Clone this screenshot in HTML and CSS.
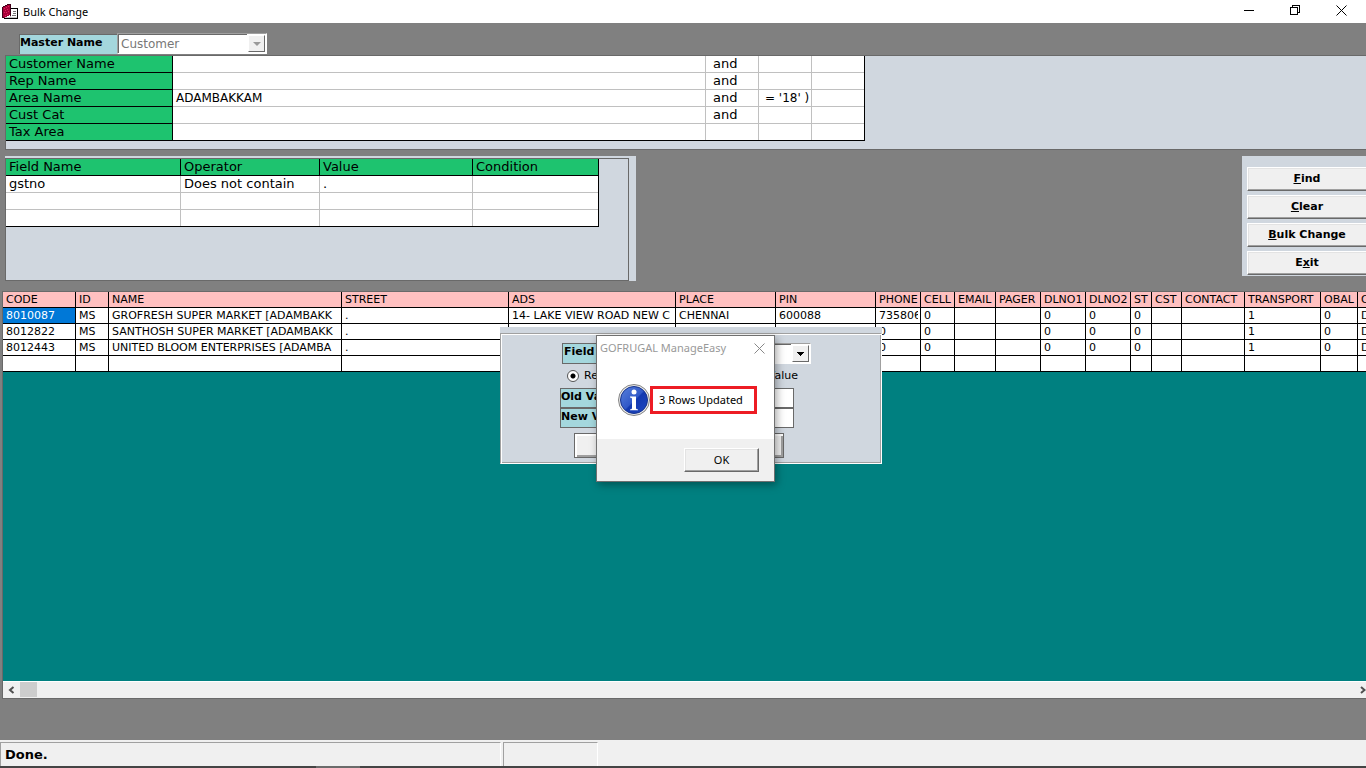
FILE: index.html
```html
<!DOCTYPE html>
<html lang="en">
<head>
<meta charset="utf-8">
<title>Bulk Change</title>
<link rel="stylesheet" href="styles.css">
</head>
<body>
<header class="titlebar">
  <svg class="app-icon" width="17" height="16" viewBox="0 0 17 16" shape-rendering="crispEdges">
    <path d="M8 4h8v10H2v-1h6z" fill="#c8c8c8"/><path d="M9 5h6v8H9z" fill="#fff"/>
    <path d="M11 7h3v1h-3zM11 9h3v1h-3zM10 11h4v1h-4z" fill="#777"/>
    <path d="M9 4h7v11H2v-1h13V5H9z" fill="#000"/>
    <path d="M1 3l7-3v11l-6 3H1z" fill="#a80038"/><path d="M0 3h1v10h1v1H0zM1 2h2v1H1zM3 1h2v1H3zM5 0h3v1H5zM8 0h1v12H8z" fill="#400018"/>
    <path d="M2 4h1v1H2zM4 3h1v1H4zM6 2h1v1H6zM3 6h1v1H3zM5 5h1v1H5zM2 8h1v1H2zM4 8h1v1H4zM6 7h1v1H6zM3 11h1v1H3zM5 10h1v1H5z" fill="#e0205c"/>
  </svg>
  <h1 class="title">Bulk Change</h1>
  <div class="window-controls">
    <button type="button" aria-label="Minimize"><svg width="11" height="11" shape-rendering="crispEdges"><path d="M0 5.500h10" stroke="#000"/></svg></button>
    <button type="button" aria-label="Restore"><svg width="11" height="11" shape-rendering="crispEdges"><path d="M.5 2.500h7v7h-7zM2.500 2V.5h7v7H8" fill="none" stroke="#000"/></svg></button>
    <button type="button" aria-label="Close"><svg width="11" height="11"><path d="M.5.5l10 10M10.500.5l-10 10" stroke="#000"/></svg></button>
  </div>
</header>

<main class="workspace">
  <div class="master">
    <label class="tag" for="master">Master Name</label>
    <div class="combo combo-disabled">
      <select id="master" disabled><option>Customer</option></select>
      <span class="drop"><svg width="8" height="4"><path d="M0 0h8L4 4z" fill="#999"/></svg></span>
    </div>
  </div>

  <section class="filters">
    <table class="sheet filter-table">
      <colgroup><col class="f-name"><col class="f-value"><col class="f-small"><col class="f-small"><col class="f-small"></colgroup>
      <tbody>
      <tr><th scope="row">Customer Name</th><td></td><td class="join">and</td><td></td><td></td></tr>
      <tr><th scope="row">Rep Name</th><td></td><td class="join">and</td><td></td><td></td></tr>
      <tr><th scope="row">Area Name</th><td class="compact">ADAMBAKKAM</td><td class="join">and</td><td class="compact expr">= '18' )</td><td></td></tr>
      <tr><th scope="row">Cust Cat</th><td></td><td class="join">and</td><td></td><td></td></tr>
      <tr><th scope="row">Tax Area</th><td></td><td></td><td></td><td></td></tr>
      </tbody>
    </table>
  </section>

  <div class="middle">
    <section class="conditions">
      <div class="conditions-frame">
        <table class="sheet condition-table">
          <colgroup><col class="c-field"><col class="c-operator"><col class="c-value"><col class="c-condition"></colgroup>
          <thead><tr><th>Field Name</th><th>Operator</th><th>Value</th><th>Condition</th></tr></thead>
          <tbody>
          <tr><td>gstno</td><td>Does not contain</td><td>.</td><td></td></tr>
          <tr><td></td><td></td><td></td><td></td></tr>
          <tr><td></td><td></td><td></td><td></td></tr>
          </tbody>
        </table>
      </div>
    </section>
    <nav class="actions">
      <button type="button" class="btn"><u>F</u>ind</button>
      <button type="button" class="btn"><u>C</u>lear</button>
      <button type="button" class="btn"><u>B</u>ulk Change</button>
      <button type="button" class="btn">E<u>x</u>it</button>
    </nav>
  </div>

  <section class="results">
    <div class="results-body">
      <table class="data">
        <colgroup><col class="w73"><col class="w33"><col class="w233"><col class="w167"><col class="w167"><col class="w100"><col class="w100"><col class="w45"><col class="w34"><col class="w41"><col class="w45"><col class="w45"><col class="w45"><col class="w21"><col class="w30"><col class="w63"><col class="w76"><col class="w37"><col class="w73"></colgroup>
        <thead><tr><th>CODE</th><th>ID</th><th>NAME</th><th>STREET</th><th>ADS</th><th>PLACE</th><th>PIN</th><th>PHONE</th><th>CELL</th><th>EMAIL</th><th>PAGER</th><th>DLNO1</th><th>DLNO2</th><th>ST</th><th>CST</th><th>CONTACT</th><th>TRANSPORT</th><th>OBAL</th><th>O</th></tr></thead>
        <tbody>
        <tr><td class="selected">8010087</td><td>MS</td><td><div>GROFRESH SUPER MARKET [ADAMBAKK</div></td><td>.</td><td><div>14- LAKE VIEW ROAD NEW C</div></td><td>CHENNAI</td><td>600088</td><td><div>735806</div></td><td>0</td><td></td><td></td><td>0</td><td>0</td><td>0</td><td></td><td></td><td>1</td><td>0</td><td>D</td></tr>
        <tr><td>8012822</td><td>MS</td><td><div>SANTHOSH SUPER MARKET [ADAMBAKK</div></td><td>.</td><td></td><td></td><td></td><td>0</td><td>0</td><td></td><td></td><td>0</td><td>0</td><td>0</td><td></td><td></td><td>1</td><td>0</td><td>D</td></tr>
        <tr><td>8012443</td><td>MS</td><td><div>UNITED BLOOM ENTERPRISES [ADAMBA</div></td><td>.</td><td></td><td></td><td></td><td>0</td><td>0</td><td></td><td></td><td>0</td><td>0</td><td>0</td><td></td><td></td><td>1</td><td>0</td><td>D</td></tr>
        <tr><td></td><td></td><td></td><td></td><td></td><td></td><td></td><td></td><td></td><td></td><td></td><td></td><td></td><td></td><td></td><td></td><td></td><td></td><td></td></tr>
        </tbody>
      </table>
    </div>
    <div class="scrollbar">
      <button type="button" aria-label="Scroll left"><svg width="7" height="8"><path d="M5.500 1L2 4l3.500 3" fill="none" stroke="#505050" stroke-width="2"/></svg></button>
      <span class="thumb"></span>
      <button type="button" class="scroll-right" aria-label="Scroll right"><svg width="6" height="8"><path d="M1 1l3.500 3L1 7" fill="none" stroke="#505050" stroke-width="2"/></svg></button>
    </div>
  </section>
</main>

<footer class="statusbar">
  <div class="status-main">Done.</div>
  <div class="status-extra"></div>
</footer>
<div class="screen-edge"></div>

<form class="change-panel">
  <div class="change-frame">
    <div class="field-row">
      <label class="tag" for="field">Field</label>
      <div class="combo">
        <select id="field"><option></option></select>
        <span class="drop"><svg width="7" height="4" shape-rendering="crispEdges"><path d="M0 0h7L3.500 4z" fill="#000"/></svg></span>
      </div>
    </div>
    <div class="mode-row">
      <label><input type="radio" name="mode" checked>Replace</label>
      <label><input type="radio" name="mode">Value</label>
    </div>
    <div class="value-row"><label class="tag" for="old">Old Value</label><input id="old" type="text"></div>
    <div class="value-row"><label class="tag" for="new">New Value</label><input id="new" type="text"></div>
    <div class="button-row"><button type="button" class="btn" aria-label="Change"></button><button type="button" class="btn" aria-label="Cancel"></button></div>
  </div>
</form>

<div class="message" role="alertdialog" aria-labelledby="message-title">
  <div class="message-head">
    <h2 class="title" id="message-title">GOFRUGAL ManageEasy</h2>
    <button type="button" aria-label="Close"><svg width="11" height="11"><path d="M.5.5l10 10M10.500.5l-10 10" stroke="#888"/></svg></button>
  </div>
  <div class="message-body">
    <svg width="32" height="32" viewBox="0 0 32 32">
      <defs><linearGradient id="blue" x1="0" y1="0" x2="1" y2="1"><stop offset="0" stop-color="#5a82dc"/><stop offset=".5" stop-color="#3058c8"/><stop offset=".54" stop-color="#1238b0"/><stop offset="1" stop-color="#2048c0"/></linearGradient></defs>
      <circle cx="16" cy="16" r="15.500" fill="#e8e8e8" stroke="#858585"/>
      <circle cx="16" cy="16" r="13.500" fill="url(#blue)" stroke="#17348e"/>
      <circle cx="16" cy="8" r="2.500" fill="#fff"/>
      <path d="M12 12.500h6v11.500c0 1 .5 1.200 2 1.500v.8h-8v-.8c1.500-.3 2-.5 2-1.500v-9c0-1-.5-1.300-2-1.500z" fill="#fff"/>
    </svg>
    <p class="message-text">3 Rows Updated</p>
  </div>
  <div class="message-foot"><button type="button" class="btn btn-ok">OK</button></div>
</div>
</body>
</html>
```
FILE: styles.css
```css
* { box-sizing: border-box; }

body {
  margin: 0;
  height: 100vh;
  display: flex;
  flex-direction: column;
  position: relative;
  overflow: hidden;
  background: #808080;
  color: #000;
  font: 12px/16px "DejaVu Sans", Verdana, sans-serif;
}

button, input, select { font: inherit; color: inherit; margin: 0; }

.title {
  margin: 0;
  font: 11px/16px "Noto Sans", "Segoe UI", sans-serif;
}

/* Title bar */
.titlebar {
  display: flex;
  align-items: center;
  height: 23px;
  padding-left: 2px;
  gap: 4px;
  background: #fff;
}
.window-controls { display: flex; margin-left: auto; height: 100%; padding-right: 2px; }
.window-controls button {
  width: 46px;
  padding: 0 0 3px;
  border: 0;
  background: none;
  display: flex;
  align-items: center;
  justify-content: center;
}

.workspace { flex: 1; min-height: 0; display: flex; flex-direction: column; }

/* Labels and combos */
.tag {
  display: block;
  padding-left: 1px;
  border: 1px solid #696969;
  background: #a4d7dd;
  font-size: 11px;
  font-weight: bold;
  line-height: 15px;
  white-space: nowrap;
}
.combo {
  display: flex;
  border: 1px solid #a0a0a0;
  border-right-color: #fff;
  border-bottom-color: #fff;
  background: #fff;
}
.combo select {
  flex: 1;
  min-width: 0;
  padding: 0 2px;
  border: 1px solid #696969;
  border-width: 1px 0 0 1px;
  background: #fff;
  appearance: none;
  opacity: 1;
}
.drop {
  width: 17px;
  margin: 1px;
  display: flex;
  align-items: center;
  justify-content: center;
  background: #f0f0f0;
  border: 1px solid #fff;
  border-right-color: #696969;
  border-bottom-color: #696969;
}
.combo-disabled select { color: #787878; }

.master { display: flex; padding: 10px 0 0 19px; height: 32px; }
.master .tag { width: 98px; margin-top: 1px; height: 20px; border-width: 1px 0 0 1px; padding-left: 0; }
.master .combo { width: 150px; height: 21px; }

/* Filter and condition sheets */
.sheet, .data { table-layout: fixed; border-collapse: separate; border-spacing: 0; }
.sheet { background: #fff; border-right: 1px solid #000; border-bottom: 1px solid #000; font-size: 13px; }
.sheet th, .sheet td {
  height: 17px;
  padding: 0 3px;
  border: 0 solid #c0c0c0;
  border-right-width: 1px;
  border-bottom-width: 1px;
  text-align: left;
  font-weight: normal;
  line-height: 16px;
  white-space: nowrap;
}
.sheet th { background: #1ec36f; border-color: #000; }
.sheet tr > :last-child { border-right-width: 0; }
.sheet tbody tr:last-child > * { border-bottom-width: 0; height: 16px; }

.filters {
  height: 95px;
  margin-left: 5px;
  border: 1px solid #696969;
  border-right: 0;
  background: #d0d7df;
}
.filter-table { width: 859px; }
.f-name { width: 167px; }
.f-value { width: 533px; }
.f-small { width: 53px; }
.sheet .join { padding-left: 7px; }
.sheet .compact { font-size: 12px; }
.sheet .expr { padding: 0 0 0 6px; }

.middle { display: flex; justify-content: space-between; align-items: flex-start; padding: 6px 0 10px 5px; }
.conditions { padding: 2px 7px 0 0; background: #d0d7df; }
.conditions-frame { width: 624px; height: 123px; border: 1px solid #696969; }
.condition-table { width: 593px; }
.c-field { width: 175px; }
.c-operator { width: 139px; }
.c-value { width: 153px; }

/* The last column takes what the table's own border leaves */
.filter-table .f-small:last-child, .c-condition { width: auto; }

/* Buttons */
.btn {
  padding: 0;
  border: 1px solid #fff;
  border-right-color: #696969;
  border-bottom-color: #696969;
  background: #f0f0f0;
  box-shadow: inset -1px -1px #a0a0a0, inset 1px 1px #e3e3e3;
}
.actions {
  display: grid;
  gap: 4px;
  width: 124px;
  height: 120px;
  padding: 11px 0 0 5px;
  background: #d0d7df;
  align-content: start;
}
.actions .btn { height: 24px; border-right: 0; font-size: 11px; font-weight: bold; box-shadow: inset 0 -1px #a0a0a0, inset 1px 1px #e3e3e3; }

/* Result grid */
.results {
  flex: 1;
  min-height: 0;
  display: flex;
  flex-direction: column;
  margin: 0 0 41px 2px;
  border: 1px solid #696969;
  border-right: 0;
  overflow: hidden;
}
.results-body { flex: 1; min-height: 0; background: #008080; overflow: hidden; }
.data { width: 1428px; background: #fff; font-size: 11px; }
.data th, .data td {
  height: 16px;
  padding: 1px 0 0 3px;
  border: 0 solid #000;
  border-right-width: 1px;
  border-bottom-width: 1px;
  line-height: 14px;
  font-weight: normal;
  text-align: left;
  white-space: nowrap;
}
.data th { background: #ffc0c0; }
.data td div { margin-right: 2px; overflow: hidden; }
.data .selected { background: #0078d7; color: #fff; }
.w21 { width: 21px; }
.w30 { width: 30px; }
.w33 { width: 33px; }
.w34 { width: 34px; }
.w37 { width: 37px; }
.w41 { width: 41px; }
.w45 { width: 45px; }
.w63 { width: 63px; }
.w73 { width: 73px; }
.w76 { width: 76px; }
.w100 { width: 100px; }
.w167 { width: 167px; }
.w233 { width: 233px; }

.scrollbar { display: flex; height: 17px; padding-bottom: 1px; border-top: 1px solid #fff; background: #f0f0f0; }
.scrollbar button { width: 17px; padding: 0; border: 0; background: none; display: flex; align-items: center; justify-content: center; }
.scrollbar .thumb { width: 17px; background: #cdcdcd; }
.scrollbar .scroll-right { margin-left: auto; width: 6px; }

/* Status bar */
.statusbar { display: flex; gap: 2px; height: 26px; padding-top: 2px; background: #f0f0f0; }
.statusbar div { border: 1px solid #a0a0a0; border-right-color: #fff; border-bottom: 0; }
.status-main { width: 501px; padding: 4px; font-size: 13px; font-weight: bold; }
.status-extra { width: 95px; }
.screen-edge { height: 2px; background: linear-gradient(90deg, #444 316px, #6b6b6b 316px, #6b6b6b 360px, #444 360px); }

/* Bulk change panel, floating over the grid */
.change-panel {
  position: absolute;
  left: calc(50% - 183px);
  top: 327px;
  width: 382px;
  padding-top: 6px;
  background: #d0d7df;
}
.change-frame {
  height: 131px;
  padding: 9px 0 0 59px;
  border: 1px solid #a0a0a0;
  border-bottom-color: #fff;
  border-right-color: #fff;
  box-shadow: inset 1px 1px #fff, inset -1px -1px #a0a0a0;
}
.field-row { display: flex; width: 251px; height: 21px; padding-left: 2px; }
.field-row .tag { width: 90px; }
.field-row .combo { flex: 1; }
.mode-row { display: flex; justify-content: space-between; align-items: center; width: 238px; height: 24px; padding-left: 7px; font-size: 11px; }
.mode-row label { display: flex; align-items: center; gap: 5px; }
.mode-row input {
  appearance: none;
  width: 12px;
  height: 12px;
  border: 1px solid #555;
  border-radius: 50%;
  background: #fff;
}
.mode-row input:checked { background: radial-gradient(circle, #000 2px, #fff 3px); }
.value-row { display: flex; width: 234px; height: 20px; }
.value-row .tag { width: 90px; padding-left: 0; }
.value-row input { flex: 1; min-width: 0; border: 1px solid #696969; padding: 0 2px; background: #fff; }
.button-row { display: flex; justify-content: space-between; width: 224px; padding: 5px 0 0 14px; }
.button-row .btn { width: 90px; height: 25px; outline: 1px solid #696969; outline-offset: -1px; box-shadow: inset 2px 2px #fff, inset -2px -2px #a0a0a0; }

/* Message box */
.message {
  position: absolute;
  left: calc(50% - 87px);
  top: 335px;
  width: 179px;
  border: 1px solid #707070;
  background: #fff;
  box-shadow: 2px 3px 8px rgba(0, 0, 0, 0.35);
}
.message-head { display: flex; justify-content: space-between; align-items: center; height: 24px; padding: 0 9px 0 3px; color: #999; }
.message-head button { padding: 0; border: 0; background: none; display: flex; }
.message-body { display: flex; align-items: center; height: 79px; padding-left: 21px; }
.message-text {
  flex: 1;
  margin: 1px 17px 0 0;
  padding: 0 0 0 6px;
  border: 3px solid #ed1c24;
  font: 11px/22px "Noto Sans", "Segoe UI", sans-serif;
  white-space: nowrap;
}
.message-foot { display: flex; justify-content: flex-end; padding: 9px 15px; height: 42px; background: #f0f0f0; }
.btn-ok { width: 75px; height: 24px; font: 11px/16px "Noto Sans", "Segoe UI", sans-serif; }
```
